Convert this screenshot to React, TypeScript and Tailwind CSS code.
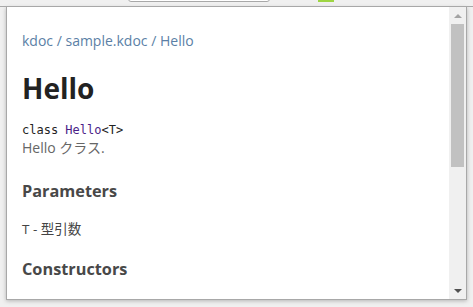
import React from "react";

export default function App() {
  return (
    <div className="w-[473px] h-[307px] bg-[#f0f0f0] overflow-hidden relative" style={{ fontFamily: '"Open Sans", "Noto Sans CJK JP", sans-serif' }}>
      <div className="h-[7px] border-b border-[#a8a8a8] relative">
        <div className="absolute left-[128px] top-[-6px] w-[142px] h-[8px] border border-[#a8a8a8] rounded-[3px] bg-white" />
        <div className="absolute left-[318px] top-0 w-[16px] h-[2px] bg-[#9ed543]" />
      </div>
      <div className="mx-[6px] h-[293px] border-l border-r border-b border-[#a8a8a8] bg-white flex shadow-[0_1px_4px_rgba(0,0,0,0.25)]">
        <div className="flex-1 overflow-hidden pl-[15px] pt-[24px]">
          <div className="text-[14px] text-[#5b7fa6] leading-[20px]">kdoc / sample.kdoc / Hello</div>
          <h1 className="mt-[19px] text-[28px] font-bold text-[#222] leading-[36px]">Hello</h1>
          <div className="mt-[16px] text-[12px] leading-[16px] text-[#222]" style={{ fontFamily: '"DejaVu Sans Mono", monospace' }}>
            class <span className="text-[#4b1e87]">Hello</span>&lt;T&gt;
          </div>
          <div className="text-[14px] leading-[20px] text-[#666]">Hello クラス.</div>
          <h3 className="mt-[22px] text-[16.3px] font-bold text-[#484848] leading-[22px]">Parameters</h3>
          <div className="mt-[17px] text-[13.5px] leading-[20px] text-[#444]">T - 型引数</div>
          <h3 className="mt-[19px] text-[16.3px] font-bold text-[#484848] leading-[22px]">Constructors</h3>
        </div>
        <div className="w-[17px] bg-[#f0f0f0] flex flex-col items-center">
          <div className="h-[17px] flex items-center justify-center">
            <div className="w-0 h-0 border-l-[4px] border-r-[4px] border-b-[4px] border-l-transparent border-r-transparent border-b-[#a3a3a3]" />
          </div>
          <div className="w-[13px] h-[143px] bg-[#c1c1c1]" />
          <div className="flex-1" />
          <div className="h-[17px] flex items-center justify-center">
            <div className="w-0 h-0 border-l-[4px] border-r-[4px] border-t-[4px] border-l-transparent border-r-transparent border-t-[#505050]" />
          </div>
        </div>
      </div>
    </div>
  );
}
